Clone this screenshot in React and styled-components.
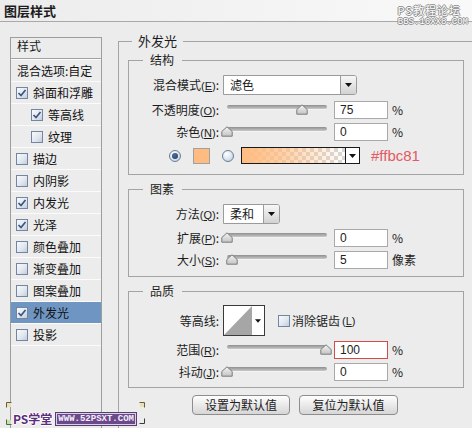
import React from 'react';
import styled, { createGlobalStyle } from 'styled-components';

const GlobalStyle = createGlobalStyle`
  html, body { margin: 0; padding: 0; overflow: hidden; }
  body {
    background: #ececec;
    font-family: "Noto Sans CJK SC", "Liberation Sans", sans-serif;
    font-size: 12px;
    color: #1a1a1a;
  }
  #root { width: 472px; height: 428px; overflow: hidden; }
`;

const Window = styled.div`
  position: relative;
  width: 472px;
  height: 428px;
  display: flex;
  flex-direction: column;
  background: #ececec;
`;

const TitleBar = styled.div`
  height: 21px;
  flex: none;
  display: flex;
  align-items: center;
  padding-left: 4px;
  border-bottom: 1px solid #a9a9a9;
  background: linear-gradient(to right, #ececec, #f9f9f9);
`;

const Title = styled.div`
  font-size: 13px;
  font-weight: 700;
  line-height: 16px;
  color: #1c1c1c;
`;

const TopMark = styled.div`
  position: absolute;
  top: 4px;
  right: 4px;
  display: flex;
  flex-direction: column;
  align-items: flex-end;
  gap: 1px;
  color: #fff;
  text-shadow: 1px 0 #8c8c8c, -1px 0 #8c8c8c, 0 1px #8c8c8c, 0 -1px #8c8c8c;
`;

const TopMarkLine = styled.span`
  font-family: ${p => (p.$mono ? '"Liberation Mono", monospace' : '"Noto Sans CJK SC", sans-serif')};
  font-size: ${p => p.$fs}px;
  line-height: ${p => p.$lh}px;
  letter-spacing: ${p => p.$ls || 0}px;
  margin-right: ${p => p.$mr || 0}px;
`;

const Main = styled.div`
  flex: 1;
  display: flex;
  padding-left: 10px;
  min-height: 0;
`;

const Sidebar = styled.div`
  width: 92px;
  box-sizing: border-box;
  margin-top: 15px;
  border: 1px solid #9d9d9d;
  border-bottom: none;
  flex: none;
`;

const SideHeader = styled.div`
  height: 21px;
  box-sizing: border-box;
  padding: 1px 0 0 6px;
  line-height: 14px;
  border-bottom: 1px solid #a2a2a2;
  box-shadow: 0 1px 0 #fbfbfb;
  margin-bottom: 1px;
`;

const SideRow = styled.div`
  height: 22px;
  box-sizing: border-box;
  display: flex;
  align-items: center;
  gap: 5px;
  padding-left: ${p => p.$indent}px;
  border-bottom: 1px solid #fbfbfb;
  background: ${p => (p.$selected ? '#6f96c3' : 'transparent')};
  color: #111;
  line-height: 14px;
  white-space: nowrap;
`;

const CheckBox = styled.span`
  width: 12px;
  height: 12px;
  box-sizing: border-box;
  flex: none;
  border: 1px solid #7385a0;
  background: linear-gradient(135deg, #f8fafc 0%, #e2e8f0 55%, #c2ccda 100%);
  display: inline-flex;
  align-items: center;
  justify-content: center;
`;

const Check = ({ checked }) => (
  <CheckBox>
    {checked && (
      <svg width="10" height="10" viewBox="0 0 10 10">
        <polyline points="1.5,5 4,7.5 8.5,2" fill="none" stroke="#3a5780" strokeWidth="1.7" />
      </svg>
    )}
  </CheckBox>
);

const OuterGroup = styled.fieldset`
  flex: 1;
  min-width: 0;
  margin: 11px 0 0 16px;
  padding: 0;
  border: 1px solid #a4a4a4;
  border-right: none;
  border-bottom: none;
`;

const Legend = styled.legend`
  margin-left: ${p => p.$ml}px;
  padding: 0 ${p => p.$pr}px 0 ${p => p.$pl}px;
  font-size: ${p => p.$fs}px;
  line-height: ${p => p.$lh}px;
  color: #1c1c1c;
`;

const OuterBody = styled.div`
  display: flex;
  flex-direction: column;
  padding: 4px 0 0 9px;
`;

const Group = styled.fieldset`
  width: 336px;
  min-width: 0;
  box-sizing: border-box;
  margin: ${p => p.$mt || 0}px 0 0 0;
  padding: 0;
  border: 1px solid #a4a4a4;
`;

const GroupBody = styled.div`
  display: flex;
  flex-direction: column;
  padding: ${p => p.$pt}px 0 ${p => p.$pb}px 0;
`;

const FormRow = styled.div`
  display: grid;
  grid-template-columns: 90px auto;
  column-gap: 4px;
  align-items: center;
  height: ${p => p.$h}px;
  margin-top: ${p => p.$mt || 0}px;
`;

const FieldLabel = styled.div`
  text-align: right;
  white-space: nowrap;
  line-height: 14px;
  color: #1c1c1c;
`;

const Key = styled.span`
  font-family: "Liberation Sans", sans-serif;
  font-size: 11px;
  u { text-decoration: underline; text-underline-offset: 1px; }
`;

const Controls = styled.div`
  display: flex;
  align-items: center;
  height: 100%;
`;

const SelectBox = styled.div`
  display: flex;
  width: ${p => p.$w}px;
  height: 20px;
  box-sizing: border-box;
  border: 1px solid #9b9b9b;
  border-radius: 0 3px 3px 0;
  background: #fff;
`;

const SelectText = styled.div`
  flex: 1;
  padding-left: 6px;
  line-height: 18px;
`;

const SelectBtn = styled.div`
  width: 15px;
  flex: none;
  border-left: 1px solid #9b9b9b;
  border-radius: 0 2px 2px 0;
  background: linear-gradient(#f7f7f7, #d2d2d2);
  display: flex;
  align-items: center;
  justify-content: center;
`;

const Arrow = ({ w = 7 }) => (
  <svg width={w} height="4" viewBox="0 0 7 4">
    <polygon points="0,0 7,0 3.5,4" fill="#111" />
  </svg>
);

const Select = ({ w, value }) => (
  <SelectBox $w={w}>
    <SelectText>{value}</SelectText>
    <SelectBtn><Arrow /></SelectBtn>
  </SelectBox>
);

const SliderWrap = styled.div`
  position: relative;
  width: 104px;
  height: 18px;
  flex: none;
`;

const Track = styled.div`
  margin: 4px 0 0 4px;
  width: 100px;
  height: 4px;
  border-radius: 2px;
  background: linear-gradient(#8f8f8f, #c9c9c9);
  box-shadow: 0 1px 0 #f4f4f4;
`;

const ThumbSvg = styled.svg`
  position: absolute;
  top: 3px;
`;

const Slider = ({ pos }) => (
  <SliderWrap>
    <Track />
    <ThumbSvg width="12" height="11" viewBox="0 0 12 11" style={{ left: 4 + pos - 6 }}>
      <defs>
        <linearGradient id="tg" x1="0" y1="0" x2="0" y2="1">
          <stop offset="0" stopColor="#f4f4f4" />
          <stop offset="1" stopColor="#c4c4c4" />
        </linearGradient>
      </defs>
      <path d="M6 0.8 L11.2 5.5 L11.2 10.2 L0.8 10.2 L0.8 5.5 Z" fill="url(#tg)" stroke="#7b7b7b" strokeWidth="1" />
    </ThumbSvg>
  </SliderWrap>
);

const NumInput = styled.div`
  width: 54px;
  height: 18px;
  box-sizing: border-box;
  margin-left: ${p => p.$ml}px;
  border: 1px solid ${p => (p.$alert ? '#d24a4a' : '#a9a9a9')};
  background: #fff;
  padding-left: 5px;
  font-family: "Liberation Sans", sans-serif;
  font-size: 12px;
  line-height: 16px;
  color: #222;
`;

const Unit = styled.span`
  margin-left: 4px;
  font-size: 12px;
  line-height: 14px;
  color: #222;
`;

const ColorRow = styled.div`
  display: flex;
  align-items: center;
  height: 17px;
  margin-top: 6px;
  padding-left: 40px;
`;

const RadioDot = styled.span`
  width: 12px;
  height: 12px;
  box-sizing: border-box;
  flex: none;
  margin-left: ${p => p.$ml || 0}px;
  border-radius: 50%;
  border: 1px solid #6a7d98;
  background: radial-gradient(circle at 35% 30%, #ffffff 0%, #dfe7f1 50%, #b7c5d8 100%);
  display: inline-flex;
  align-items: center;
  justify-content: center;
  &::after {
    content: '';
    display: ${p => (p.$on ? 'block' : 'none')};
    width: 6px;
    height: 6px;
    border-radius: 50%;
    background: radial-gradient(circle at 40% 35%, #4c6f9c, #1f3a60);
  }
`;

const Swatch = styled.span`
  width: 17px;
  height: 16px;
  box-sizing: border-box;
  margin-left: 12px;
  border: 1px solid #a0a0a0;
  background: #ffbc81;
`;

const GradientPicker = styled.div`
  display: flex;
  margin-left: 7px;
  height: 17px;
  box-sizing: border-box;
  border: 1px solid #1a1a1a;
  background: #fff;
`;

const GradientFill = styled.div`
  width: 103px;
  background:
    linear-gradient(to right, #ffbc81 0%, rgba(255, 188, 129, 0.75) 35%, rgba(255, 188, 129, 0) 100%),
    linear-gradient(45deg, #d8d8d8 25%, transparent 25%, transparent 75%, #d8d8d8 75%),
    linear-gradient(45deg, #d8d8d8 25%, #fff 25%, #fff 75%, #d8d8d8 75%);
  background-size: 100% 100%, 8px 8px, 8px 8px;
  background-position: 0 0, 0 0, 4px 4px;
`;

const PickerArrow = styled.div`
  width: 13px;
  border-left: 1px solid #1a1a1a;
  display: flex;
  align-items: center;
  justify-content: center;
`;

const HexText = styled.span`
  margin-left: 11px;
  font-family: "Liberation Sans", sans-serif;
  font-size: 15px;
  line-height: 17px;
  color: #e25a64;
`;

const ContourPicker = styled.div`
  display: flex;
  width: 42px;
  height: 31px;
  box-sizing: border-box;
  border: 1px solid #3a3a3a;
  background: #fff;
`;

const ContourArrow = styled.div`
  flex: 1;
  display: flex;
  align-items: center;
  justify-content: center;
`;

const InlineCheck = styled.label`
  display: flex;
  align-items: center;
  gap: 2px;
  margin-left: 13px;
  line-height: 14px;
  color: #1c1c1c;
`;

const ButtonRow = styled.div`
  display: flex;
  gap: 9px;
  margin-top: 7px;
  padding-left: 64px;
`;

const Button = styled.button`
  width: ${p => p.$w}px;
  height: 20px;
  padding: 0;
  box-sizing: border-box;
  border: 1px solid #8d8d8d;
  border-radius: 4px;
  background: linear-gradient(#fefefe, #e6e6e6 60%, #d6d6d6);
  font-family: "Noto Sans CJK SC", sans-serif;
  font-size: 12px;
  line-height: 16px;
  color: #222;
`;

const BottomMark = styled.div`
  position: absolute;
  left: 5px;
  bottom: 2px;
  display: flex;
  align-items: center;
  gap: 4px;
`;

const PsMark = styled.span`
  font-family: "Noto Sans CJK SC", sans-serif;
  font-size: 12px;
  font-weight: 700;
  line-height: 14px;
  color: #5b2d7c;
  margin-left: 8px;
  text-shadow: 1px 0 #fff, -1px 0 #fff, 0 1px #fff, 0 -1px #fff;
`;

const UrlMark = styled.span`
  font-family: "Liberation Mono", monospace;
  font-size: 9px;
  font-weight: 700;
  line-height: 10px;
  padding: 0 1px;
  color: #f4eefa;
  background: #6b4a8a;
  border: 1px solid #d9d2e2;
  outline: 1px solid #5a3a78;
`;

const Corner = styled.svg`
  position: absolute;
`;

const sideItems = [
  { label: '斜面和浮雕', checked: true, indent: 5 },
  { label: '等高线', checked: true, indent: 20 },
  { label: '纹理', checked: false, indent: 20 },
  { label: '描边', checked: false, indent: 5 },
  { label: '内阴影', checked: false, indent: 5 },
  { label: '内发光', checked: true, indent: 5 },
  { label: '光泽', checked: true, indent: 5 },
  { label: '颜色叠加', checked: false, indent: 5 },
  { label: '渐变叠加', checked: false, indent: 5 },
  { label: '图案叠加', checked: false, indent: 5 },
  { label: '外发光', checked: true, indent: 5, selected: true },
  { label: '投影', checked: false, indent: 5 },
];

const Lbl = ({ text, k }) => (
  <FieldLabel>
    {text}
    {k && (
      <Key>
        (<u>{k}</u>)
      </Key>
    )}
    :
  </FieldLabel>
);

const SliderField = ({ label, k, pos, value, unit, alert, mt }) => (
  <FormRow $h={18} $mt={mt}>
    <Lbl text={label} k={k} />
    <Controls>
      <Slider pos={pos} />
      <NumInput $ml={7} $alert={alert}>{value}</NumInput>
      <Unit>{unit}</Unit>
    </Controls>
  </FormRow>
);

export default function App() {
  return (
    <>
      <GlobalStyle />
      <Window>
        <TitleBar>
          <Title>图层样式</Title>
        </TitleBar>
        <TopMark>
          <TopMarkLine $fs={11} $lh={12} $ls={1} $mr={7}>PS教程论坛</TopMarkLine>
          <TopMarkLine $mono $fs={9} $lh={10}>BBS.16XX8.COM</TopMarkLine>
        </TopMark>
        <Main>
          <Sidebar>
            <SideHeader>样式</SideHeader>
            <SideRow $indent={6}>混合选项:自定</SideRow>
            {sideItems.map(it => (
              <SideRow key={it.label} $indent={it.indent} $selected={it.selected}>
                <Check checked={it.checked} />
                {it.label}
              </SideRow>
            ))}
          </Sidebar>
          <OuterGroup>
            <Legend $ml={13} $pl={6} $pr={6} $fs={13} $lh={16}>外发光</Legend>
            <OuterBody>
              <Group>
                <Legend $ml={14} $pl={7} $pr={8} $fs={12} $lh={14}>结构</Legend>
                <GroupBody $pt={8} $pb={10}>
                  <FormRow $h={20}>
                    <Lbl text="混合模式" k="E" />
                    <Controls>
                      <Select w={134} value="滤色" />
                    </Controls>
                  </FormRow>
                  <SliderField label="不透明度" k="O" pos={75} value="75" unit="%" mt={6} />
                  <SliderField label="杂色" k="N" pos={0} value="0" unit="%" mt={4} />
                  <ColorRow>
                    <RadioDot $on />
                    <Swatch />
                    <RadioDot $ml={12} />
                    <GradientPicker>
                      <GradientFill />
                      <PickerArrow><Arrow /></PickerArrow>
                    </GradientPicker>
                    <HexText>#ffbc81</HexText>
                  </ColorRow>
                </GroupBody>
              </Group>

              <Group $mt={7}>
                <Legend $ml={14} $pl={7} $pr={8} $fs={12} $lh={14}>图素</Legend>
                <GroupBody $pt={8} $pb={7}>
                  <FormRow $h={20}>
                    <Lbl text="方法" k="Q" />
                    <Controls>
                      <Select w={57} value="柔和" />
                    </Controls>
                  </FormRow>
                  <SliderField label="扩展" k="P" pos={0} value="0" unit="%" mt={5} />
                  <SliderField label="大小" k="S" pos={5} value="5" unit="像素" mt={4} />
                </GroupBody>
              </Group>

              <Group $mt={7}>
                <Legend $ml={14} $pl={7} $pr={8} $fs={12} $lh={14}>品质</Legend>
                <GroupBody $pt={7} $pb={6}>
                  <FormRow $h={31}>
                    <Lbl text="等高线" />
                    <Controls>
                      <ContourPicker>
                        <svg width="28" height="29" viewBox="0 0 28 29">
                          <rect x="0" y="0" width="28" height="29" fill="#fff" />
                          <polygon points="0,29 28,0 28,29" fill="#a6a6a6" />
                        </svg>
                        <ContourArrow><Arrow w={6} /></ContourArrow>
                      </ContourPicker>
                      <InlineCheck>
                        <Check checked={false} />
                        消除锯齿<Key>(<u>L</u>)</Key>
                      </InlineCheck>
                    </Controls>
                  </FormRow>
                  <SliderField label="范围" k="R" pos={99} value="100" unit="%" alert mt={5} />
                  <SliderField label="抖动" k="J" pos={0} value="0" unit="%" mt={4} />
                </GroupBody>
              </Group>

              <ButtonRow>
                <Button $w={98}>设置为默认值</Button>
                <Button $w={99}>复位为默认值</Button>
              </ButtonRow>
            </OuterBody>
          </OuterGroup>
        </Main>
        <BottomMark>
          <PsMark>PS学堂</PsMark>
          <UrlMark>WWW.52PSXT.COM</UrlMark>
        </BottomMark>
        <Corner width="6" height="6" viewBox="0 0 6 6" style={{ left: 6, top: 402 }}>
          <path d="M0.5 5.5 V0.5 H5.5" fill="none" stroke="#6a5a3a" strokeWidth="1" />
          <rect x="1" y="1" width="4" height="4" fill="#e8e2b0" />
        </Corner>
        <Corner width="6" height="6" viewBox="0 0 6 6" style={{ left: 6, top: 419 }}>
          <path d="M0.5 0.5 V5.5 H5.5" fill="none" stroke="#4a6a3a" strokeWidth="1" />
          <rect x="1" y="1" width="4" height="4" fill="#c4e0b0" />
        </Corner>
        <Corner width="6" height="6" viewBox="0 0 6 6" style={{ left: 139, top: 402 }}>
          <path d="M0.5 0.5 H5.5 V5.5" fill="none" stroke="#6a5a3a" strokeWidth="1" />
          <rect x="1" y="1" width="4" height="4" fill="#e8e2b0" />
        </Corner>
        <Corner width="6" height="6" viewBox="0 0 6 6" style={{ left: 139, top: 418 }}>
          <path d="M5.5 0.5 V5.5 H0.5" fill="none" stroke="#3a3a3a" strokeWidth="1" />
        </Corner>
      </Window>
    </>
  );
}
